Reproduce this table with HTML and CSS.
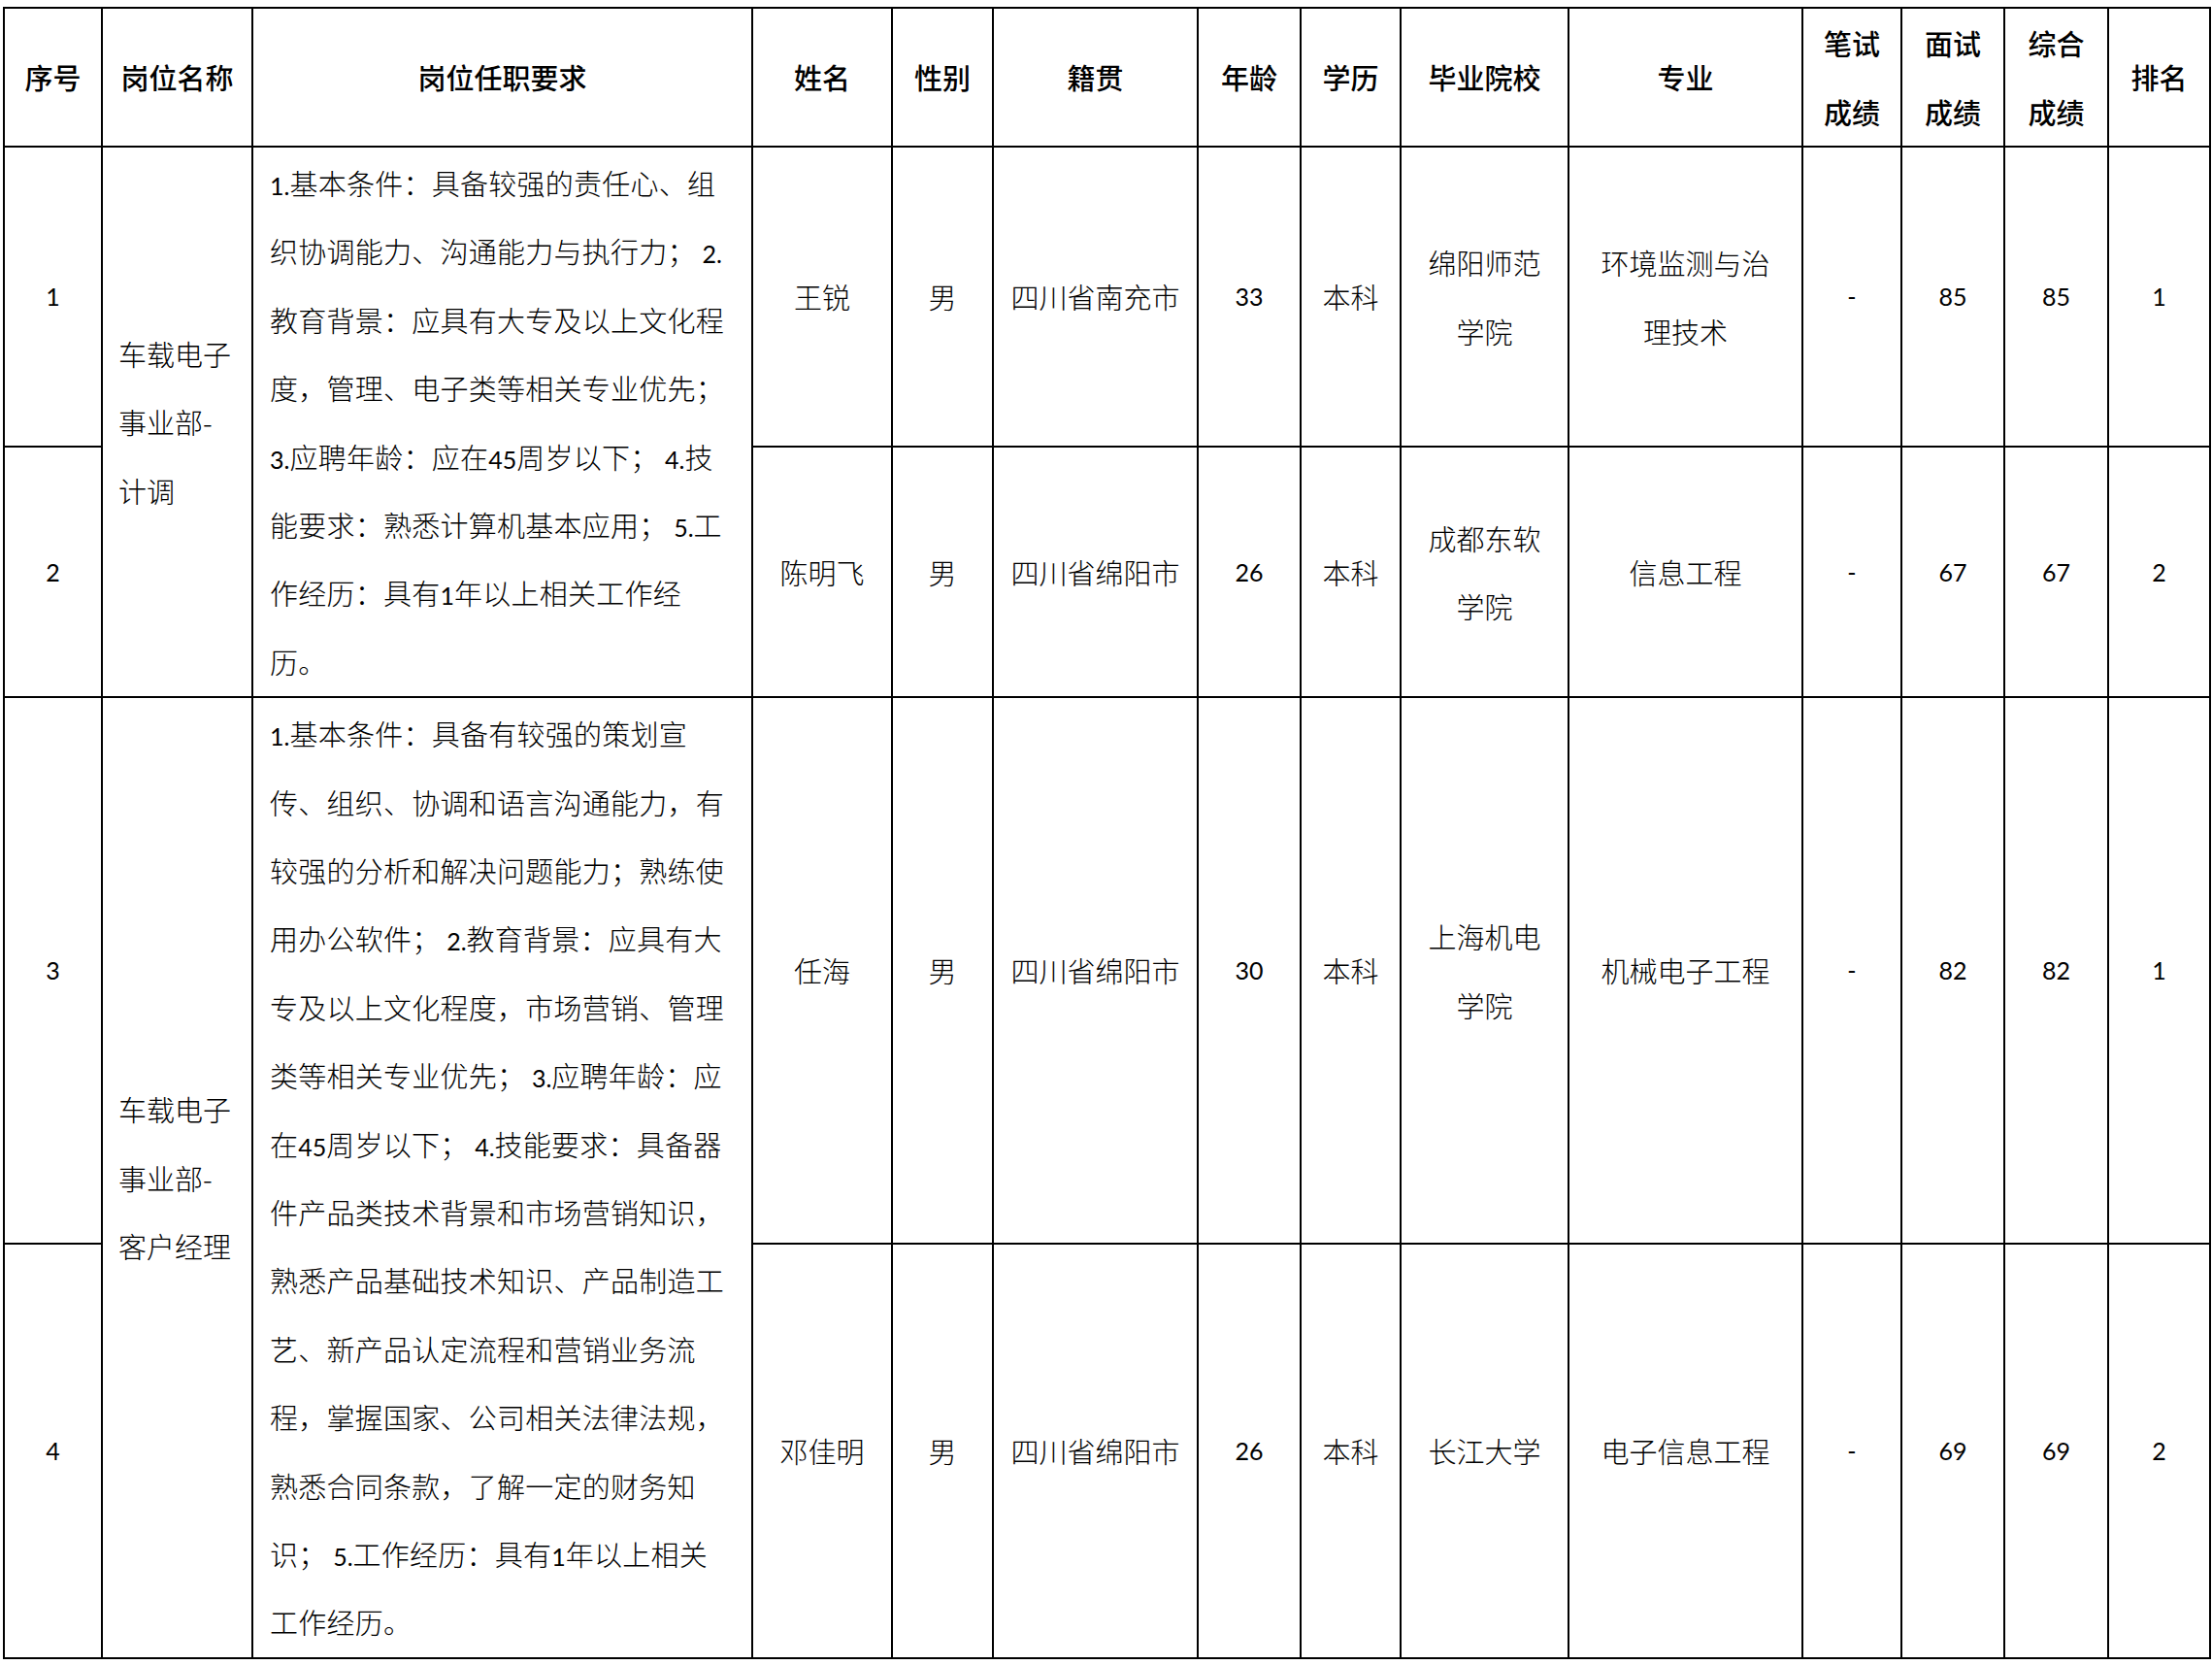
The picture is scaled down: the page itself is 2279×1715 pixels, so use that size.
FILE: index.html
```html
<!DOCTYPE html>
<html lang="zh-CN">
<head>
<meta charset="utf-8">
<title>招聘成绩表</title>
<link rel="stylesheet" href="styles.css">
</head>
<body>
<div class="sheet">
  <div class="cell th">序号</div>
  <div class="cell th">岗位名称</div>
  <div class="cell th">岗位任职要求</div>
  <div class="cell th">姓名</div>
  <div class="cell th">性别</div>
  <div class="cell th">籍贯</div>
  <div class="cell th">年龄</div>
  <div class="cell th">学历</div>
  <div class="cell th">毕业院校</div>
  <div class="cell th">专业</div>
  <div class="cell th"><p>笔试<br>成绩</p></div>
  <div class="cell th"><p>面试<br>成绩</p></div>
  <div class="cell th"><p>综合<br>成绩</p></div>
  <div class="cell th">排名</div>

  <div class="cell num">1</div>
  <div class="cell post span2"><p>车载电子<br>事业部-<br>计调</p></div>
  <div class="cell req span2"><p><span class="n">1.</span>基本条件：具备较强的责任心、组<br>织协调能力、沟通能力与执行力； <span class="n">2.</span><br>教育背景：应具有大专及以上文化程<br>度，管理、电子类等相关专业优先；<br><span class="n">3.</span>应聘年龄：应在<span class="n">45</span>周岁以下； <span class="n">4.</span>技<br>能要求：熟悉计算机基本应用； <span class="n">5.</span>工<br>作经历：具有<span class="n">1</span>年以上相关工作经<br>历。</p></div>
  <div class="cell">王锐</div>
  <div class="cell">男</div>
  <div class="cell">四川省南充市</div>
  <div class="cell num">33</div>
  <div class="cell">本科</div>
  <div class="cell"><p>绵阳师范<br>学院</p></div>
  <div class="cell"><p>环境监测与治<br>理技术</p></div>
  <div class="cell num">-</div>
  <div class="cell num">85</div>
  <div class="cell num">85</div>
  <div class="cell num">1</div>

  <div class="cell num">2</div>
  <div class="cell">陈明飞</div>
  <div class="cell">男</div>
  <div class="cell">四川省绵阳市</div>
  <div class="cell num">26</div>
  <div class="cell">本科</div>
  <div class="cell"><p>成都东软<br>学院</p></div>
  <div class="cell">信息工程</div>
  <div class="cell num">-</div>
  <div class="cell num">67</div>
  <div class="cell num">67</div>
  <div class="cell num">2</div>

  <div class="cell num">3</div>
  <div class="cell post span2"><p>车载电子<br>事业部-<br>客户经理</p></div>
  <div class="cell req span2"><p><span class="n">1.</span>基本条件：具备有较强的策划宣<br>传、组织、协调和语言沟通能力，有<br>较强的分析和解决问题能力；熟练使<br>用办公软件； <span class="n">2.</span>教育背景：应具有大<br>专及以上文化程度，市场营销、管理<br>类等相关专业优先； <span class="n">3.</span>应聘年龄：应<br>在<span class="n">45</span>周岁以下； <span class="n">4.</span>技能要求：具备器<br>件产品类技术背景和市场营销知识，<br>熟悉产品基础技术知识、产品制造工<br>艺、新产品认定流程和营销业务流<br>程，掌握国家、公司相关法律法规，<br>熟悉合同条款，了解一定的财务知<br>识； <span class="n">5.</span>工作经历：具有<span class="n">1</span>年以上相关<br>工作经历。</p></div>
  <div class="cell">任海</div>
  <div class="cell">男</div>
  <div class="cell">四川省绵阳市</div>
  <div class="cell num">30</div>
  <div class="cell">本科</div>
  <div class="cell"><p>上海机电<br>学院</p></div>
  <div class="cell">机械电子工程</div>
  <div class="cell num">-</div>
  <div class="cell num">82</div>
  <div class="cell num">82</div>
  <div class="cell num">1</div>

  <div class="cell num">4</div>
  <div class="cell">邓佳明</div>
  <div class="cell">男</div>
  <div class="cell">四川省绵阳市</div>
  <div class="cell num">26</div>
  <div class="cell">本科</div>
  <div class="cell">长江大学</div>
  <div class="cell">电子信息工程</div>
  <div class="cell num">-</div>
  <div class="cell num">69</div>
  <div class="cell num">69</div>
  <div class="cell num">2</div>
</div>
</body>
</html>
```

FILE: styles.css
```css
html, body {
  margin: 0;
  padding: 0;
  background: #ffffff;
}

body {
  padding: 7px 0 0 3px;
  font-family: "Noto Sans CJK SC", sans-serif;
  color: #000000;
}

.sheet {
  display: grid;
  width: max-content;
  grid-template-columns: 99px 153px 513px 142px 102px 209px 104px 101px 171px 239px 100px 104px 105px 103px;
  grid-template-rows: 141px 307px 256px 561px 425px;
  gap: 2px;
  background: #000000;
  border: 2px solid #000000;
}

.cell {
  background: #ffffff;
  display: flex;
  justify-content: center;
  align-items: center;
  text-align: center;
  font-size: 29px;
  line-height: 70.4px;
  font-weight: 300;
  white-space: nowrap;
  overflow: hidden;
}

.cell p {
  margin: 0;
}

.th {
  font-weight: 500;
}

.span2 {
  grid-row: span 2;
}

.post {
  justify-content: flex-start;
  text-align: left;
  padding-left: 16px;
}

.req {
  justify-content: flex-start;
  text-align: left;
  padding-left: 17px;
  letter-spacing: 0.25px;
}

.num {
  font-family: Lato, "Noto Sans CJK SC", sans-serif;
  font-size: 25px;
  font-weight: 400;
}

.n {
  font-family: Lato, sans-serif;
  font-size: 25px;
  font-weight: 400;
  line-height: 1;
  letter-spacing: 0;
}
```
